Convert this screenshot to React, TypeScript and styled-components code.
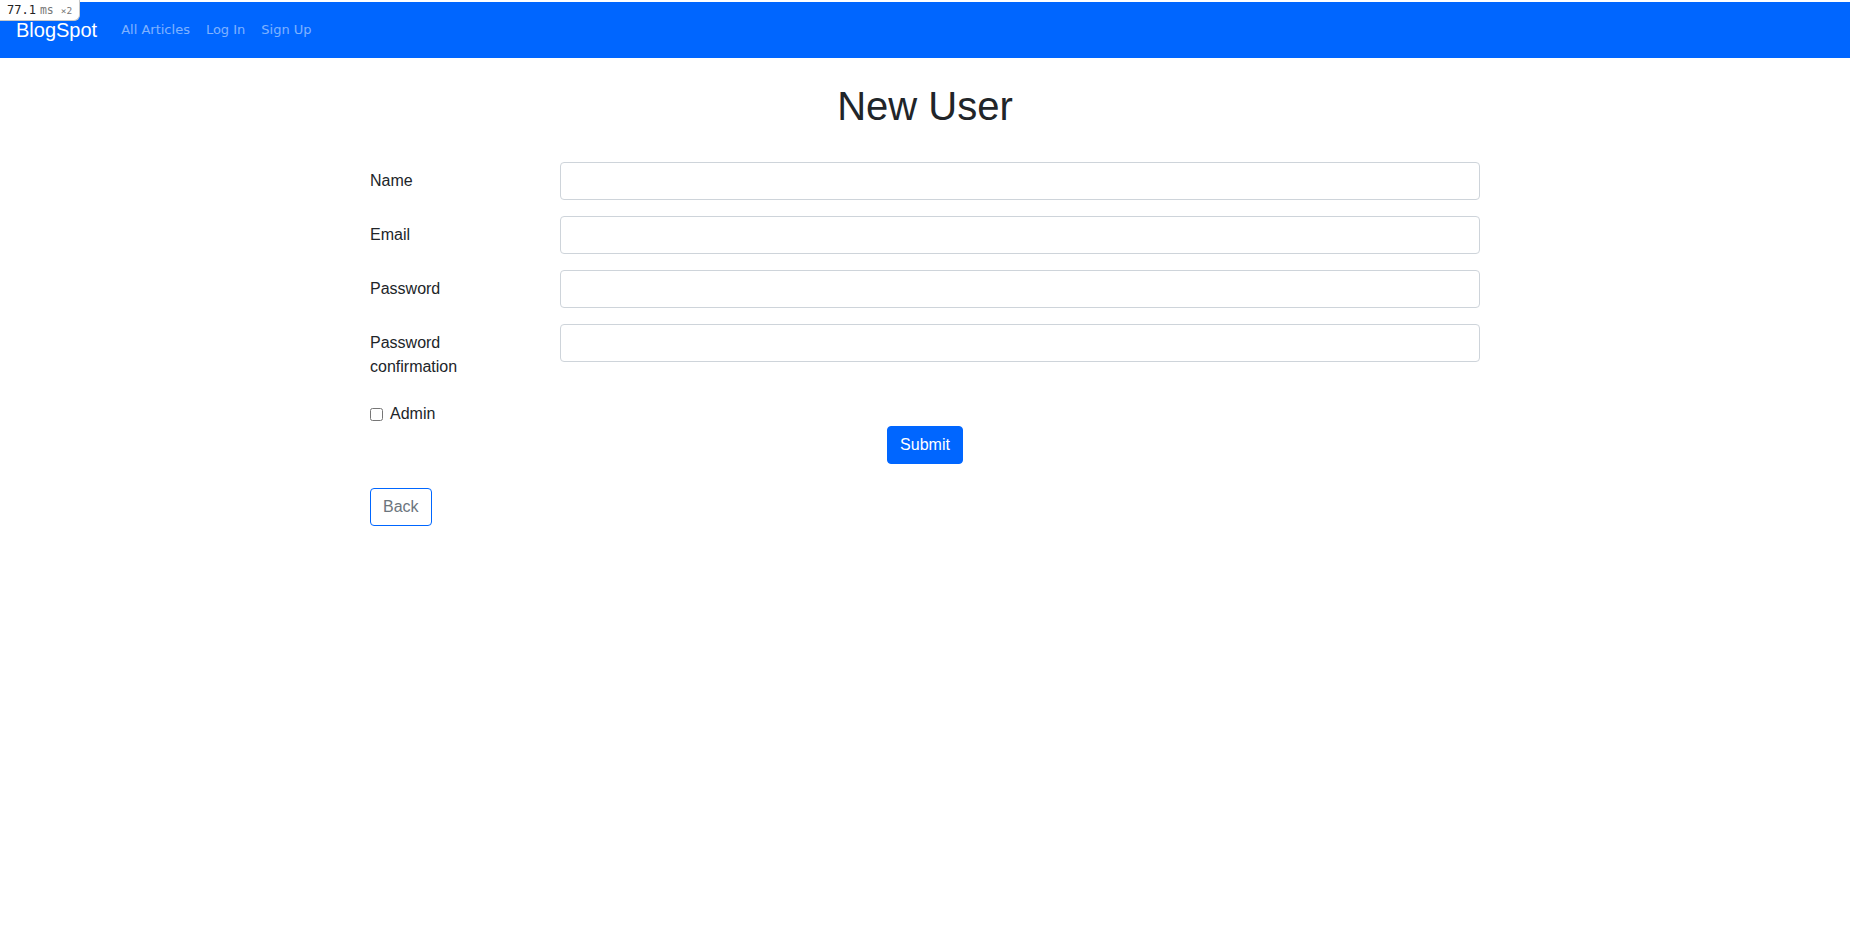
import React from "react";
import styled, { createGlobalStyle } from "styled-components";

const GlobalStyle = createGlobalStyle`
  html, body { margin: 0; padding: 0; background: #fff; }
  body {
    font-family: "Liberation Sans", Arial, sans-serif;
    font-size: 16px;
    line-height: 1.5;
    color: #212529;
  }
  *, *::before, *::after { box-sizing: border-box; }
`;

const Page = styled.div`
  position: relative;
  padding-top: 2px;
  min-height: 951px;
`;

const PerfBadge = styled.div`
  position: absolute;
  top: 0;
  left: 0;
  z-index: 10;
  display: flex;
  align-items: baseline;
  gap: 4px;
  height: 21px;
  padding: 0 7px 0 7px;
  background: #fff;
  border-right: 1px solid #c8c8c8;
  border-bottom: 1px solid #c8c8c8;
  border-bottom-right-radius: 6px;
  font-family: "DejaVu Sans Mono", "Liberation Mono", monospace;
  line-height: 21px;
`;

const PerfValue = styled.span`
  font-size: 12px;
  color: #222;
`;

const PerfUnit = styled.span`
  font-size: 11.5px;
  color: #777;
`;

const PerfCount = styled.span`
  font-size: 9.5px;
  color: #777;
  margin-left: 3px;
`;

const NavBar = styled.nav`
  display: flex;
  align-items: center;
  height: 56px;
  padding: 8px 16px;
  background: #0066ff;
`;

const Brand = styled.a`
  font-family: "Liberation Sans", Arial, sans-serif;
  font-size: 20px;
  line-height: 30px;
  padding: 5px 0;
  margin-right: 16px;
  color: #fff;
  text-decoration: none;
`;

const NavList = styled.div`
  display: flex;
  align-items: center;
`;

const NavLink = styled.a`
  font-family: "DejaVu Sans", Verdana, sans-serif;
  font-size: 13px;
  padding: 8px;
  color: rgba(255, 255, 255, 0.5);
  text-decoration: none;
`;

const Container = styled.main`
  width: 1140px;
  margin: 0 auto;
  padding: 0 15px;
`;

const Title = styled.h1`
  margin: 24px 0 32px;
  font-size: 40px;
  font-weight: 500;
  line-height: 1.2;
  text-align: center;
  color: #212529;
`;

const FormRow = styled.div`
  display: flex;
  margin: 0 -15px 16px;
`;

const LabelCol = styled.label`
  flex: 0 0 190px;
  padding: 7px 15px;
  line-height: 24px;
`;

const FieldCol = styled.div`
  flex: 1;
  padding: 0 15px;
`;

const Input = styled.input`
  display: block;
  width: 100%;
  height: 38px;
  padding: 6px 12px;
  font-size: 16px;
  font-family: inherit;
  color: #495057;
  background: #fff;
  border: 1px solid #ced4da;
  border-radius: 4px;
  outline: none;
`;

const CheckRow = styled.div`
  position: relative;
  padding-left: 20px;
  line-height: 24px;
`;

const CheckBox = styled.input`
  position: absolute;
  left: 0;
  top: 0;
  width: 13px;
  height: 13px;
  margin: 6px 0 0 0;
`;

const CheckLabel = styled.label`
  color: #212529;
`;

const Actions = styled.div`
  display: flex;
  justify-content: center;
`;

const Button = styled.button<{ $variant: "primary" | "outline" }>`
  display: inline-block;
  height: 38px;
  padding: 6px 12px;
  font-family: "Liberation Sans", Arial, sans-serif;
  font-size: 16px;
  line-height: 24px;
  border-radius: 4px;
  border: 1px solid #0066ff;
  cursor: pointer;
  background: ${(p) => (p.$variant === "primary" ? "#0066ff" : "#fff")};
  color: ${(p) => (p.$variant === "primary" ? "#fff" : "#6c757d")};
`;

const BackRow = styled.div`
  margin-top: 24px;
`;

const fields = [
  { id: "name", label: "Name", type: "text" },
  { id: "email", label: "Email", type: "email" },
  { id: "password", label: "Password", type: "password" },
  { id: "password_confirmation", label: "Password confirmation", type: "password" },
];

export default function App() {
  return (
    <>
      <GlobalStyle />
      <Page>
        <PerfBadge>
          <PerfValue>77.1</PerfValue>
          <PerfUnit>ms</PerfUnit>
          <PerfCount>×2</PerfCount>
        </PerfBadge>
        <NavBar>
          <Brand href="#">BlogSpot</Brand>
          <NavList>
            <NavLink href="#">All Articles</NavLink>
            <NavLink href="#">Log In</NavLink>
            <NavLink href="#">Sign Up</NavLink>
          </NavList>
        </NavBar>
        <Container>
          <Title>New User</Title>
          <form onSubmit={(e) => e.preventDefault()}>
            {fields.map((f) => (
              <FormRow key={f.id}>
                <LabelCol htmlFor={f.id}>{f.label}</LabelCol>
                <FieldCol>
                  <Input id={f.id} type={f.type} />
                </FieldCol>
              </FormRow>
            ))}
            <CheckRow>
              <CheckBox id="admin" type="checkbox" />
              <CheckLabel htmlFor="admin">Admin</CheckLabel>
            </CheckRow>
            <Actions>
              <Button $variant="primary" type="submit">Submit</Button>
            </Actions>
          </form>
          <BackRow>
            <Button $variant="outline" type="button">Back</Button>
          </BackRow>
        </Container>
      </Page>
    </>
  );
}
